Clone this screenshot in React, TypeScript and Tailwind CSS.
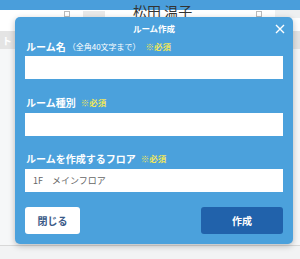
import React from "react";

export default function App() {
  const font = { fontFamily: '"Noto Sans CJK JP", "Noto Sans", sans-serif' };
  return (
    <div className="relative w-[300px] h-[259px] overflow-hidden bg-[#f2f3f4]" style={font}>
      {/* background page */}
      <div className="flex flex-col">
        <div className="h-[10px] bg-[#4a9edb]" />
        <div className="h-[8px] bg-white flex items-end relative">
          <div className="absolute left-[64px] top-[1px] w-[6px] h-[6px] border border-[#bbb]" />
          <div className="absolute left-[83px] top-[1px] w-[22px] h-[7px] bg-[#e9e9e9]" />
          <div className="absolute left-[133px] top-[-6px] text-[14px] leading-[14px] text-[#333]">松田 温子</div>
          <div className="absolute left-[256px] top-[1px] w-[6px] h-[6px] border border-[#bbb]" />
          <div className="absolute left-[275px] top-0 w-[25px] h-[8px] bg-[#eef0f1]" />
        </div>
        <div className="h-[13px] bg-white" />
        <div className="h-[18px] bg-[#e4e4e4] flex items-center pl-[2px] text-[10px] font-bold text-white">ト</div>
        <div className="h-[196px] bg-[#f6f7f8]" />
        <div className="h-[1px] bg-[#d8d8d8]" />
      </div>

      {/* modal */}
      <div className="absolute left-[15px] top-[17px] w-[278px] h-[227px] rounded-[5px] bg-[#4ba1dc] shadow-[0_2px_6px_rgba(0,0,0,0.25)] px-[10px]">
        <div className="relative h-[22px] flex items-center justify-center text-[8.5px] leading-none font-bold text-white pt-[1px]">
          ルーム作成
          <svg className="absolute right-[-2px] top-[7px]" width="10" height="10" viewBox="0 0 10 10">
            <path d="M1 1 L9 9 M9 1 L1 9" stroke="white" strokeWidth="1.4" />
          </svg>
        </div>
        <div className="flex items-center h-[15px] pl-[1px]">
          <span className="text-[10px] leading-none font-bold text-white">ルーム名</span>
          <span className="text-[8px] leading-none text-white ml-[2px]">（全角40文字まで）</span>
          <span className="text-[8.5px] leading-none font-bold text-[#efe65a] ml-[5px]">※必須</span>
        </div>
        <div className="mt-[2px] h-[23px] bg-white" />
        <div className="flex items-center mt-[16px] h-[15px] pl-[1px]">
          <span className="text-[10px] leading-none font-bold text-white">ルーム種別</span>
          <span className="text-[8.5px] leading-none font-bold text-[#efe65a] ml-[5px]">※必須</span>
        </div>
        <div className="mt-[3px] h-[23px] bg-white" />
        <div className="flex items-center mt-[15px] h-[15px] pl-[1px]">
          <span className="text-[10px] leading-none font-bold text-white">ルームを作成するフロア</span>
          <span className="text-[8.5px] leading-none font-bold text-[#efe65a] ml-[5px]">※必須</span>
        </div>
        <div className="mt-[3px] h-[23px] bg-white flex items-center pl-[8px] text-[9px] leading-none text-[#666]">
          1F　メインフロア
        </div>
        <div className="flex justify-between mt-[15px]">
          <button className="w-[55px] h-[27px] rounded-[3px] bg-white text-[10px] leading-none font-bold text-[#3b5a88]">閉じる</button>
          <button className="w-[82px] h-[27px] rounded-[3px] bg-[#2162ab] text-[10px] leading-none font-bold text-white">作成</button>
        </div>
      </div>
    </div>
  );
}
